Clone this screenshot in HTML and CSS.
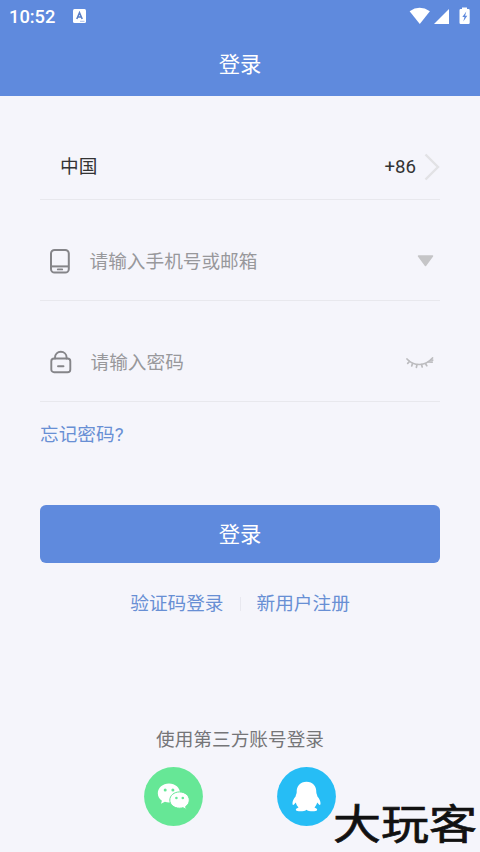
FILE: index.html
```html
<!DOCTYPE html>
<html lang="zh-CN">
<head>
<meta charset="utf-8">
<title>登录</title>
<link rel="stylesheet" href="styles.css">
</head>
<body>
<div class="screen">
  <header class="header">
    <div class="status">
      <span class="time">10:52</span>
      <svg class="ime" width="13" height="14" viewBox="0 0 13 14"><rect width="13" height="14" rx="1.5" fill="#fff"/><path d="M3.8 10 6.5 3.8 9.2 10M4.7 8H8.3" fill="none" stroke="#5b80c8" stroke-width="1.6"/><path d="M7 12.3h4.5" stroke="#a9bfec" stroke-width="1"/></svg>
      <svg class="indicators" width="62" height="18" viewBox="0 0 62 18"><path d="M.6 4.2Q10.5-2.6 20.9 4.2L10.8 17Z" fill="#fff"/><path d="M40 2v15H25Z" fill="#fff"/><path d="M53 .5h5v1.6h1.5q1.2 0 1.2 1.2v12.4q0 1.2-1.2 1.2h-7.8q-1.2 0-1.2-1.2V3.3q0-1.2 1.2-1.2H53Z" fill="#fff"/><path d="m57.300 4.500-4 5.600h2.200l-1.200 4.400 4-5.800h-2.200Z" fill="#5f8add"/></svg>
    </div>
    <h1 class="title">登录</h1>
  </header>
  <main class="form">
    <div class="row country">
      <span class="name">中国</span>
      <span class="code">+86</span>
      <svg width="16" height="28" viewBox="0 0 16 28"><path d="M1.5 1.500 14 14 1.500 26.500" fill="none" stroke="#e2e2e5" stroke-width="2.400"/></svg>
    </div>
    <div class="row field">
      <svg class="icon" width="20" height="26" viewBox="0 0 20 26"><g fill="none" stroke="#858589" stroke-width="2"><rect x="1" y="1.900" width="17.800" height="22.600" rx="3.600"/><path d="M1 18.400h17.800"/></g><path d="M7.800 21.400h4.400" stroke="#858589" stroke-width="1.800" stroke-linecap="round"/></svg>
      <span class="hint">请输入手机号或邮箱</span>
      <svg class="drop" width="17" height="12" viewBox="0 0 17 12"><path d="M1.500 1h14L8.500 10.500Z" fill="#c5c5c7" stroke="#c5c5c7" stroke-width="1.500" stroke-linejoin="round"/></svg>
    </div>
    <div class="row field password">
      <svg class="icon" width="22" height="24" viewBox="0 0 22 24"><g fill="none" stroke="#858589" stroke-width="1.900" stroke-linecap="round"><rect x="1.300" y="8.500" width="19" height="13.700" rx="2.800"/><path d="M5 8.500V7.600C5 4.100 7.600 1.800 10.800 1.800s5.800 2.300 5.800 5.800v.9M8 16.300h5.500"/></g></svg>
      <span class="hint">请输入密码</span>
      <svg class="eye" width="28" height="13" viewBox="0 0 28 13"><g fill="none" stroke="#bcbcbf" stroke-width="1.700" stroke-linecap="round"><path d="M1 3C5 7.500 9 8.500 13.500 8.500S22 7 26.500 2"/><path d="M3.500 5.500 1.700 7.300M6.600 7.400 5.700 10M11 8.600l-.6 2.700M15.500 8.500l.7 2.500M19.500 7.600l1.300 2.100M22.500 6l3.700.2M24.800 4l1.900.1"/></g></svg>
    </div>
    <a class="forgot">忘记密码?</a>
    <button class="submit">登录</button>
    <nav class="links"><a>验证码登录</a><i class="divider"></i><a>新用户注册</a></nav>
  </main>
  <section class="third">
    <p class="caption">使用第三方账号登录</p>
    <div class="socials">
      <svg width="59" height="59" viewBox="0 0 59 59"><circle cx="29.500" cy="29.500" r="29.400" fill="#66e796"/><path d="M25 16.500c-6.300 0-11.200 4.300-11.200 9.700 0 3.100 1.500 5.700 4.100 7.500l-.9 3 3.900-2c1.300.5 2.700.7 4.100.7 6.200 0 11.100-4 11.100-9.200 0-5.400-4.800-9.700-11.100-9.700Z" fill="#fff"/><path d="M35.600 24.900c-5.500 0-9.800 3.600-9.800 8.200s4.300 8.100 9.800 8.100c1.200 0 2.300-.2 3.400-.5l3.400 1.700-.8-2.800c2.300-1.500 3.700-3.800 3.700-6.500 0-4.600-4.300-8.200-9.700-8.200Z" fill="#fff" stroke="#66e796" stroke-width="1"/><g fill="#66e796"><circle cx="21.200" cy="23" r="1.500"/><circle cx="28.900" cy="23" r="1.500"/><circle cx="32.400" cy="31" r="1.300"/><circle cx="38.800" cy="31" r="1.300"/></g></svg>
      <svg width="59" height="59" viewBox="0 0 59 59"><circle cx="29.500" cy="29.500" r="29.400" fill="#26bdf5"/><path d="M29.500 14.800c-6.300 0-10 4.500-9.800 10.500 0 1.500-.9 2.200-1 3.900-2.300 2.800-3.400 5.300-3.200 7.500.1 1.300.8 1.700 1.500.9l1.800-2c.4 1.900 1.300 3.500 2.700 4.800-2.200.8-3.100 1.800-2.500 2.900 1 1.500 9 1.300 10.500-.6 1.500 1.900 9.500 2.100 10.500.6.600-1.100-.3-2.100-2.500-2.900 1.400-1.300 2.300-2.900 2.700-4.800l1.800 2c.7.800 1.400.4 1.500-.9.200-2.200-.9-4.700-3.200-7.500-.1-1.700-1-2.400-1-3.900.2-6-3.500-10.500-9.800-10.500Z" fill="#fff"/></svg>
    </div>
  </section>
  <div class="watermark">大玩客</div>
</div>
</body>
</html>
```

FILE: styles.css
```css
* { box-sizing: border-box; }
body { margin: 0; }
.screen {
  position: relative;
  width: 480px;
  height: 852px;
  overflow: hidden;
  background: #f5f5fb;
  font-family: Roboto, "Noto Sans CJK SC", sans-serif;
  font-size: 18.67px;
  line-height: 28px;
}
svg { display: block; flex: none; }
.header { height: 96px; background: #5f8add; color: #fff; }
.status { display: flex; align-items: center; height: 32px; padding: 0 9px; }
.time { font-size: 18.3px; font-weight: 500; width: 64px; padding-top: 2px; }
.indicators { margin-left: auto; }
.title { margin: 0; padding-top: 1px; font-size: 21.33px; font-weight: 400; line-height: 64px; text-align: center; }
.form { padding: 0 40px; }
.row { display: flex; align-items: center; height: 101px; border-bottom: 1px solid #e8e8ed; }
.country { height: 104px; padding: 38px 0 0 20px; color: #333; }
.country { align-items: center; }
.name, .code { line-height: 28px; }
.code { margin: 0 8px 0 auto; }
.field { padding: 22px 0 0 10px; color: #98989b; }
.hint { padding-top: 2px; }
.icon { margin-right: 19.5px; }
.drop { margin-right: 6px; margin-left: auto; }
.password .icon { margin-right: 18.5px; }
.eye { margin-left: auto; margin-right: 6px; }
.forgot { display: block; margin-top: 19px; color: #688fd4; }
.submit {
  display: block;
  width: 400px;
  height: 58px;
  margin: 56px 0 0;
  padding: 2px 0 0;
  border: 0;
  border-radius: 6px;
  background: #5f8add;
  color: #fff;
  font: inherit;
  font-size: 21.33px;
}
.links { display: flex; justify-content: center; align-items: center; gap: 16px; margin-top: 27px; color: #688fd4; }
.divider { width: 1px; height: 14px; background: #e8e8ef; }
.third { margin-top: 108px; }
.caption { margin: 0; text-align: center; color: #757578; }
.socials { display: flex; justify-content: center; gap: 74px; margin-top: 13px; }
.watermark {
  position: absolute;
  left: 333px;
  top: 800px;
  font-size: 48px;
  line-height: 50px;
  font-weight: 400;
  color: #111;
  white-space: nowrap;
  transform: scaleY(.86);
  -webkit-text-stroke: .8px #111;
}
```
